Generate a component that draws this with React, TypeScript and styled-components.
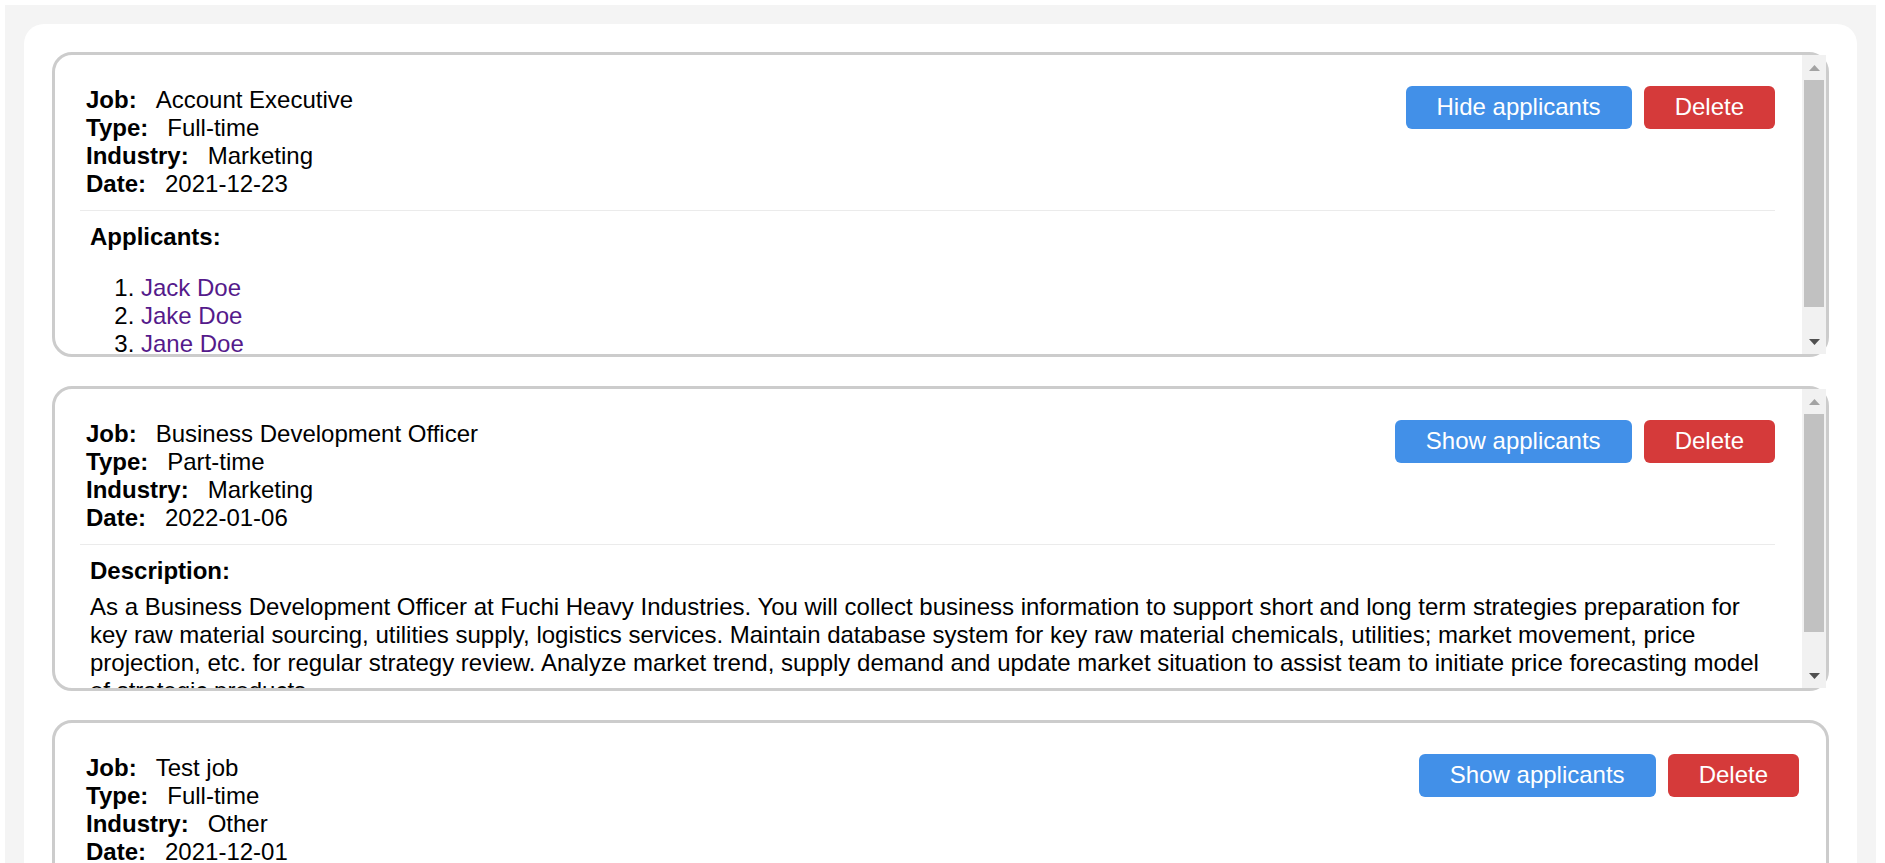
import React, { useLayoutEffect, useRef, useState } from "react";
import styled, { createGlobalStyle } from "styled-components";

const GlobalStyle = createGlobalStyle`
  html, body {
    margin: 0;
    padding: 0;
    background: #ffffff;
  }
  body {
    font-family: "Liberation Sans", Arial, sans-serif;
    font-size: 24px;
    line-height: 28px;
    color: #000000;
  }
`;

const Page = styled.div`
  margin: 5px 9px 0 5px;
  padding: 19px 19px 0 19px;
  background: #f4f4f4;
`;

const Panel = styled.main`
  background: #ffffff;
  border-radius: 20px;
  padding: 28px;
  display: flex;
  flex-direction: column;
  gap: 29px;
`;

const Card = styled.article`
  box-sizing: border-box;
  height: 305px;
  border: 3px solid #cccccc;
  border-radius: 20px;
  display: flex;
  align-items: stretch;
`;

const Body = styled.div`
  flex: 1;
  min-width: 0;
  overflow: hidden;
  padding: 31px 27px 0 31px;
`;

const ScrollBar = styled.div`
  flex: none;
  width: 24px;
  display: flex;
  flex-direction: column;
  background: #f1f1f1;
`;

const ScrollButton = styled.div`
  flex: none;
  height: 25px;
  display: flex;
  align-items: center;
  justify-content: center;
`;

const ScrollTrack = styled.div`
  flex: 1;
  padding: 0 2px;
`;

const ScrollThumb = styled.div`
  background: #c1c1c1;
`;

const Header = styled.header`
  display: flex;
  justify-content: space-between;
  align-items: flex-start;
`;

const Info = styled.div`
  display: flex;
  flex-direction: column;
`;

const Field = styled.div`
  line-height: 28px;
  white-space: nowrap;
`;

const Label = styled.b`
  font-weight: bold;
  margin-right: 19px;
`;

const Actions = styled.div`
  display: flex;
  gap: 12px;
`;

const Button = styled.button<{ $variant: "primary" | "danger" }>`
  font-family: "Liberation Sans", Arial, sans-serif;
  font-size: 24px;
  line-height: 28px;
  color: #ffffff;
  border: none;
  border-radius: 6px;
  padding: 7px 31px 8px;
  cursor: pointer;
  background: ${(p) => (p.$variant === "primary" ? "#4290e8" : "#d53a3a")};
`;

const Section = styled.section`
  margin: 12px 0 0 -6px;
  border-top: 1px solid #ebebeb;
  padding: 12px 0 25px 10px;
`;

const SectionTitle = styled.div`
  font-weight: bold;
  line-height: 28px;
`;

const ApplicantList = styled.ol`
  margin: 23px 0 0;
  padding-left: 51px;
`;

const ApplicantLink = styled.a`
  color: #551a8b;
  text-decoration: none;
`;

const Description = styled.p`
  margin: 8px 0 0;
  line-height: 28px;
`;

type Job = {
  job: string;
  type: string;
  industry: string;
  date: string;
  showApplicants: boolean;
  applicants: string[];
  description: string;
};

const jobs: Job[] = [
  {
    job: "Account Executive",
    type: "Full-time",
    industry: "Marketing",
    date: "2021-12-23",
    showApplicants: true,
    applicants: ["Jack Doe", "Jake Doe", "Jane Doe"],
    description: "",
  },
  {
    job: "Business Development Officer",
    type: "Part-time",
    industry: "Marketing",
    date: "2022-01-06",
    showApplicants: false,
    applicants: [],
    description:
      "As a Business Development Officer at Fuchi Heavy Industries. You will collect business information to support short and long term strategies preparation for key raw material sourcing, utilities supply, logistics services. Maintain database system for key raw material chemicals, utilities; market movement, price projection, etc. for regular strategy review. Analyze market trend, supply demand and update market situation to assist team to initiate price forecasting model of strategic products.",
  },
  {
    job: "Test job",
    type: "Full-time",
    industry: "Other",
    date: "2021-12-01",
    showApplicants: false,
    applicants: [],
    description: "Test description",
  },
];

function UpArrow() {
  return (
    <svg width="11" height="6" viewBox="0 0 11 6">
      <polygon points="0,6 11,6 5.5,0" fill="#a3a3a3" />
    </svg>
  );
}

function DownArrow() {
  return (
    <svg width="11" height="6" viewBox="0 0 11 6">
      <polygon points="0,0 11,0 5.5,6" fill="#505050" />
    </svg>
  );
}

function JobCard({ data }: { data: Job }) {
  const bodyRef = useRef<HTMLDivElement>(null);
  const [ratio, setRatio] = useState<number | null>(null);

  useLayoutEffect(() => {
    const el = bodyRef.current;
    if (!el) return;
    const overflow = el.scrollHeight > el.clientHeight + 1;
    const r = overflow
      ? Math.round((el.clientHeight / el.scrollHeight) * 1000) / 1000
      : null;
    setRatio((prev) => (prev === r ? prev : r));
  });

  return (
    <Card>
      <Body ref={bodyRef}>
        <Header>
          <Info>
            <Field>
              <Label>Job:</Label>
              {data.job}
            </Field>
            <Field>
              <Label>Type:</Label>
              {data.type}
            </Field>
            <Field>
              <Label>Industry:</Label>
              {data.industry}
            </Field>
            <Field>
              <Label>Date:</Label>
              {data.date}
            </Field>
          </Info>
          <Actions>
            <Button $variant="primary">
              {data.showApplicants ? "Hide applicants" : "Show applicants"}
            </Button>
            <Button $variant="danger">Delete</Button>
          </Actions>
        </Header>
        <Section>
          {data.showApplicants ? (
            <>
              <SectionTitle>Applicants:</SectionTitle>
              <ApplicantList>
                {data.applicants.map((a) => (
                  <li key={a}>
                    <ApplicantLink href="#">{a}</ApplicantLink>
                  </li>
                ))}
              </ApplicantList>
            </>
          ) : (
            <>
              <SectionTitle>Description:</SectionTitle>
              <Description>{data.description}</Description>
            </>
          )}
        </Section>
      </Body>
      {ratio !== null && (
        <ScrollBar>
          <ScrollButton>
            <UpArrow />
          </ScrollButton>
          <ScrollTrack>
            <ScrollThumb style={{ height: `${ratio * 100}%` }} />
          </ScrollTrack>
          <ScrollButton>
            <DownArrow />
          </ScrollButton>
        </ScrollBar>
      )}
    </Card>
  );
}

export default function App() {
  return (
    <>
      <GlobalStyle />
      <Page>
        <Panel>
          {jobs.map((j) => (
            <JobCard key={j.job} data={j} />
          ))}
        </Panel>
      </Page>
    </>
  );
}
